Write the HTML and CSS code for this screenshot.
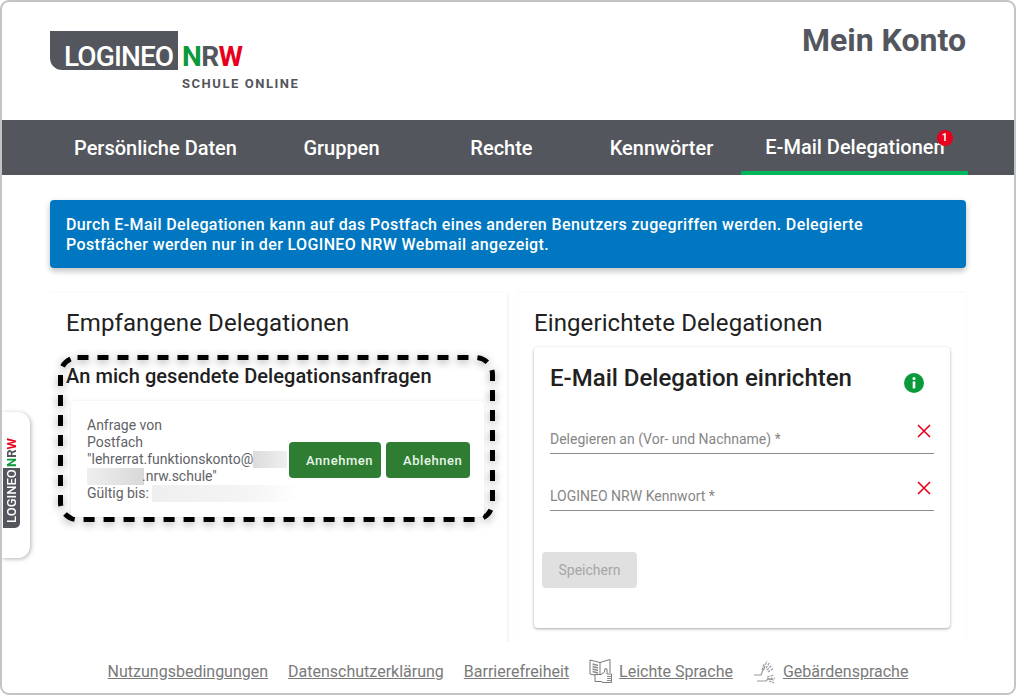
FILE: index.html
```html
<!DOCTYPE html>
<html lang="de">
<head>
    <meta charset="UTF-8">
    <meta name="viewport" content="width=device-width, initial-scale=1.0">
    <title>Mein Konto</title>
    <link rel="stylesheet" href="styles.css">
</head>
<body>
    <div class="window">
        <header class="top">
            <div class="logo">
                <div class="logo-line">
                    <span class="logo-box">LOGINEO</span>
                    <span class="logo-nrw"><span class="green">N</span>R<span class="red">W</span></span>
                </div>
                <div class="logo-sub">SCHULE ONLINE</div>
            </div>
            <h1>Mein Konto</h1>
        </header>

        <nav class="tabs">
            <a class="tab">Persönliche Daten</a>
            <a class="tab">Gruppen</a>
            <a class="tab">Rechte</a>
            <a class="tab">Kennwörter</a>
            <a class="tab active"><span class="tab-label">E-Mail Delegationen<span class="badge">1</span></span></a>
        </nav>

        <main class="content">
            <div class="alert">Durch E-Mail Delegationen kann auf das Postfach eines anderen Benutzers zugegriffen werden. Delegierte Postfächer werden nur in der LOGINEO NRW Webmail angezeigt.</div>

            <div class="columns">
                <section class="panel panel-left">
                    <h2>Empfangene Delegationen</h2>
                    <div class="dashed">
                        <svg class="dash-frame" width="437" height="167" viewBox="0 0 437 167">
                            <rect x="2.5" y="2.5" width="432" height="162" rx="17" fill="none" stroke="#000" stroke-width="5" stroke-dasharray="11 9"/>
                        </svg>
                        <h3>An mich gesendete Delegationsanfragen</h3>
                        <div class="request">
                            <div class="request-text">
                                Anfrage von<br>
                                Postfach<br>
                                "lehrerrat.funktionskonto@<span class="blur blur-a"></span><br>
                                <span class="blur blur-b"></span>.nrw.schule"<br>
                                Gültig bis: <span class="blur blur-c"></span>
                            </div>
                            <button class="btn">Annehmen</button>
                            <button class="btn">Ablehnen</button>
                        </div>
                    </div>
                </section>

                <section class="panel panel-right">
                    <h2>Eingerichtete Delegationen</h2>
                    <div class="card">
                        <div class="card-head">
                            <h2 class="card-title">E-Mail Delegation einrichten</h2>
                            <svg class="info" width="20" height="20" viewBox="0 0 20 20">
                                <circle cx="10" cy="10" r="10" fill="#0a9a3c"/>
                                <circle cx="10" cy="5.6" r="1.5" fill="#fff"/>
                                <rect x="8.7" y="8.4" width="2.6" height="7" fill="#fff"/>
                            </svg>
                        </div>
                        <div class="field">
                            <span>Delegieren an (Vor- und Nachname) *</span>
                            <svg class="cross" width="14" height="14" viewBox="0 0 14 14"><path d="M1 1 13 13M13 1 1 13" stroke="#e8001c" stroke-width="1.6" fill="none"/></svg>
                        </div>
                        <div class="field">
                            <span>LOGINEO NRW Kennwort *</span>
                            <svg class="cross" width="14" height="14" viewBox="0 0 14 14"><path d="M1 1 13 13M13 1 1 13" stroke="#e8001c" stroke-width="1.6" fill="none"/></svg>
                        </div>
                        <button class="save">Speichern</button>
                    </div>
                </section>
            </div>
        </main>

        <footer class="footer">
            <a>Nutzungsbedingungen</a>
            <a>Datenschutzerklärung</a>
            <a>Barrierefreiheit</a>
            <span class="foot-icon">
                <svg width="24" height="26" viewBox="0 0 24 26" fill="none" stroke="#7a7a7a" stroke-width="1">
                    <path d="M1 2 11 4.500V17H5L1 16ZM11 4.500 21 1.500V15"/>
                    <path d="M3.500 6 9 7.500M3.500 8.500 9 10M3.500 11 9 12.500M3.500 13.500 9 15" stroke-width="1.300" stroke="#8c8c8c"/>
                    <path d="M6 16.500H12L15.500 14 16 10.500 18 11V16H22.500V24.500H14L12 23.500H6Z" fill="#fff"/>
                    <path d="M18 18.500H23M18 20.500H23M18 22.500H23" stroke="#8c8c8c"/>
                </svg>
                <a>Leichte Sprache</a>
            </span>
            <span class="foot-icon">
                <svg width="24" height="26" viewBox="0 0 22 26" fill="none" stroke="#999" stroke-width="1.200">
                    <path d="M0 17H7L9 12 11 10"/>
                    <path d="M8 12 10 6M10 10 13 3M12 10 16 4M13 12 18 7M14 14 20 10" stroke-dasharray="2.500 1"/>
                    <path d="M3 23H12L14 21 20 22"/>
                    <path d="M13 19 20 17M13 21 21 20M15 23 20 25" stroke-dasharray="2.500 1"/>
                </svg>
                <a>Gebärdensprache</a>
            </span>
        </footer>

        <aside class="side-tab">
            <div class="side-logo">
                <span class="side-box">LOGINEO</span><span class="side-nrw"><span class="green">N</span>R<span class="red">W</span></span>
            </div>
        </aside>
    </div>
</body>
</html>
```

FILE: styles.css
```css
* {
    box-sizing: border-box;
}
html, body {
    margin: 0;
    height: 100%;
    overflow: hidden;
}
body {
    font-family: Roboto, 'Liberation Sans', sans-serif;
    background-color: #fff;
    color: #212121;
}
.window {
    position: relative;
    height: 695px;
    border: 2px solid #c4c4c4;
    border-radius: 9px;
    overflow: hidden;
    background-color: #fff;
}

/* header */
.top {
    height: 118px;
    padding: 29px 48px 0 48px;
    display: flex;
    justify-content: space-between;
}
h1 {
    margin: -13px 0 0;
    font-size: 32px;
    line-height: 44px;
    font-weight: 700;
    color: #53565c;
}
.logo-line {
    display: flex;
    align-items: flex-end;
    height: 39px;
}
.logo-box {
    width: 128px;
    height: 39px;
    padding: 10px 0 0 14px;
    background-color: #53565c;
    border-bottom-left-radius: 12px;
    color: #fff;
    font-size: 28px;
    line-height: 32px;
    font-weight: 500;
    letter-spacing: -0.9px;
}
.logo-nrw {
    margin-left: 4px;
    height: 39px;
    padding-top: 10px;
    font-size: 28px;
    line-height: 32px;
    font-weight: 700;
    letter-spacing: -0.6px;
    color: #53565c;
}
.green { color: #0a9a3c; }
.red { color: #e8001c; }
.logo-sub {
    margin: 6px 0 0 132px;
    font-size: 13px;
    line-height: 15px;
    font-weight: 700;
    letter-spacing: 1.55px;
    color: #53565c;
}

/* tabs */
.tabs {
    height: 55px;
    padding-left: 47.5px;
    display: flex;
    background-color: #53565c;
}
.tab {
    flex: none;
    min-width: 160px;
    padding: 0 24.5px;
    display: flex;
    align-items: center;
    justify-content: center;
    color: #fff;
    font-size: 20px;
    font-weight: 500;
}
.tab.active {
    width: 227px;
    padding: 3px 0 0;
    border-bottom: 4px solid #00b65a;
}
.tab-label {
    position: relative;
}
.badge {
    position: absolute;
    top: -5px;
    right: -8px;
    width: 16px;
    height: 16px;
    border-radius: 50%;
    background-color: #e8001c;
    font-size: 10px;
    font-weight: 700;
    line-height: 16px;
    text-align: center;
}

/* content */
.content {
    height: 467px;
    padding: 25px 48px 0;
    overflow: hidden;
}
.alert {
    height: 68px;
    padding: 15px 90px 0 16px;
    background-color: #0077c0;
    border-radius: 4px;
    box-shadow: 0 3px 6px rgba(0, 0, 0, 0.25);
    color: #fff;
    font-size: 16px;
    line-height: 20px;
    font-weight: 500;
    letter-spacing: 0.38px;
}
.columns {
    display: flex;
    gap: 11px;
    margin-top: 25px;
}
.panel {
    height: 351px;
    padding: 16px 16px 0;
    box-shadow: 1px 0 2px rgba(0, 0, 0, 0.08);
}
.panel-left {
    width: 457px;
}
.panel-right {
    width: 448px;
    box-shadow: 0 -1px 2px rgba(0, 0, 0, 0.04);
}
h2 {
    margin: 0;
    font-size: 24px;
    line-height: 28px;
    font-weight: 400;
    letter-spacing: 0.1px;
    color: #212121;
}
.dashed {
    position: relative;
    width: 437px;
    height: 167px;
    margin: 18px 0 0 -8px;
    padding: 5px;
}
.dash-frame {
    position: absolute;
    left: 0;
    top: 0;
    filter: drop-shadow(0 2px 4px rgba(0, 0, 0, 0.4));
}
h3 {
    position: relative;
    margin: 0;
    padding: 4px 0 0 3px;
    font-size: 20px;
    line-height: 24px;
    font-weight: 500;
    letter-spacing: 0.08px;
    color: #212121;
}
.request {
    position: relative;
    display: flex;
    align-items: center;
    margin: 13px 6px 0 8px;
    height: 116px;
    padding: 0 13px 0 16px;
    background-color: #fff;
    border-radius: 4px;
    box-shadow: 0 0 3px rgba(0, 0, 0, 0.1);
}
.request-text {
    width: 202px;
    font-size: 14px;
    line-height: 17px;
    color: #5f6368;
    white-space: nowrap;
}
.blur {
    display: inline-block;
    height: 17px;
    vertical-align: top;
    background: linear-gradient(90deg, #dcdcdc, #efefef);
}
.blur-a { width: 34px; }
.blur-b { width: 57px; margin-right: -2px; background: linear-gradient(90deg, #efefef, #d8d8d8); }
.blur-c { width: 146px; background: linear-gradient(90deg, #efefef, #f5f5f5 70%, #fff); }
.btn {
    height: 36px;
    margin: 2px 5px 0 0;
    padding: 0 8px 0 17px;
    border: none;
    border-radius: 4px;
    background-color: #2e7d32;
    color: #e8f5e9;
    font-family: inherit;
    font-size: 13px;
    font-weight: 500;
    letter-spacing: 0.55px;
}
.btn:last-child {
    margin-right: 0;
}

/* right card */
.card {
    height: 281px;
    margin-top: 10px;
    padding: 16px 16px 0;
    background-color: #fff;
    border-radius: 4px;
    box-shadow: 0 1px 3px rgba(0, 0, 0, 0.35);
}
.card-head {
    display: flex;
    justify-content: space-between;
    height: 34px;
    padding-right: 10px;
}
.card-title {
    padding-top: 1px;
    font-weight: 500;
    letter-spacing: 0;
}
.info {
    margin-top: 10px;
}
.field {
    position: relative;
    height: 34px;
    margin-top: 23px;
    padding-top: 9px;
    border-bottom: 1px solid #8c8c8c;
    font-size: 14px;
    line-height: 20px;
    color: #868686;
}
.cross {
    position: absolute;
    right: 3px;
    top: 4px;
}
.save {
    display: block;
    width: 95px;
    height: 36px;
    margin: 41px 0 0 -8px;
    border: none;
    border-radius: 4px;
    background-color: #e0e0e0;
    color: #a6a6a6;
    font-family: inherit;
    font-size: 14px;
}

/* footer */
.footer {
    display: flex;
    justify-content: center;
    align-items: center;
    gap: 20px;
    height: 53px;
    padding-top: 5px;
    font-size: 16px;
    color: #7a7a7a;
}
.footer a {
    text-decoration: underline;
}
.foot-icon {
    display: flex;
    align-items: center;
    gap: 6px;
}

/* logo tab on the left edge */
.side-tab {
    position: absolute;
    left: 0;
    top: 410px;
    width: 28px;
    height: 146px;
    background-color: #fff;
    border-radius: 0 12px 12px 0;
    box-shadow: 1px 1px 4px rgba(0, 0, 0, 0.3);
}
.side-logo {
    position: absolute;
    left: 1px;
    bottom: 30px;
    display: flex;
    writing-mode: vertical-rl;
    transform: rotate(180deg);
    font-size: 13px;
    line-height: 17px;
}
.side-box {
    width: 17px;
    height: 60px;
    padding-top: 5px;
    background-color: #53565c;
    border-top-left-radius: 5px;
    color: #fff;
    font-weight: 500;
}
.side-nrw {
    margin-top: 1px;
    font-weight: 700;
    color: #53565c;
}
```
